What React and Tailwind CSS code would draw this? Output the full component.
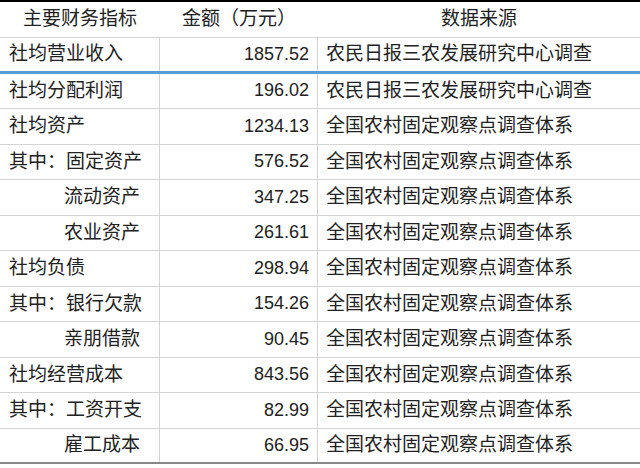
const rows = [
  ["社均营业收入", "1857.52", "农民日报三农发展研究中心调查", 0, true],
  ["社均分配利润", "196.02", "农民日报三农发展研究中心调查", 0],
  ["社均资产", "1234.13", "全国农村固定观察点调查体系", 0],
  ["其中：固定资产", "576.52", "全国农村固定观察点调查体系", 0],
  ["流动资产", "347.25", "全国农村固定观察点调查体系", 1],
  ["农业资产", "261.61", "全国农村固定观察点调查体系", 1],
  ["社均负债", "298.94", "全国农村固定观察点调查体系", 0],
  ["其中：银行欠款", "154.26", "全国农村固定观察点调查体系", 0],
  ["亲朋借款", "90.45", "全国农村固定观察点调查体系", 1],
  ["社均经营成本", "843.56", "全国农村固定观察点调查体系", 0],
  ["其中：工资开支", "82.99", "全国农村固定观察点调查体系", 0],
  ["雇工成本", "66.95", "全国农村固定观察点调查体系", 1],
];
export default function App() {
  const font = { fontFamily: '"Liberation Sans","Noto Sans CJK SC",sans-serif' };
  return (
    <div className="w-[640px] h-[468px] bg-white text-[#222] text-[19px] overflow-hidden" style={font}>
      <div className="border-t-2 border-black" />
      <div className="flex h-[36px] items-center border-b border-[#d4d4d4]">
        <div className="w-[160px] text-center">主要财务指标</div>
        <div className="w-[158px] text-center">金额（万元）</div>
        <div className="flex-1 text-center">数据来源</div>
      </div>
      {rows.map(([a, b, c, ind, blue], i) => (
        <div key={i} className={`flex h-[35.5px] items-center ${blue ? "border-b-[3px] border-[#5b9bd5]" : i === 11 ? "border-b-2 border-[#888]" : "border-b border-[#d4d4d4]"}`}>
          <div className={`w-[160px] h-full flex items-center border-r border-[#d4d4d4] ${ind ? "pl-[64px]" : "pl-[9px]"}`}>{a}</div>
          <div className="w-[158px] h-full flex items-center justify-end pr-[8px] border-r border-[#d4d4d4] text-[18px]">{b}</div>
          <div className="flex-1 pl-[8px]">{c}</div>
        </div>
      ))}
    </div>
  );
}
